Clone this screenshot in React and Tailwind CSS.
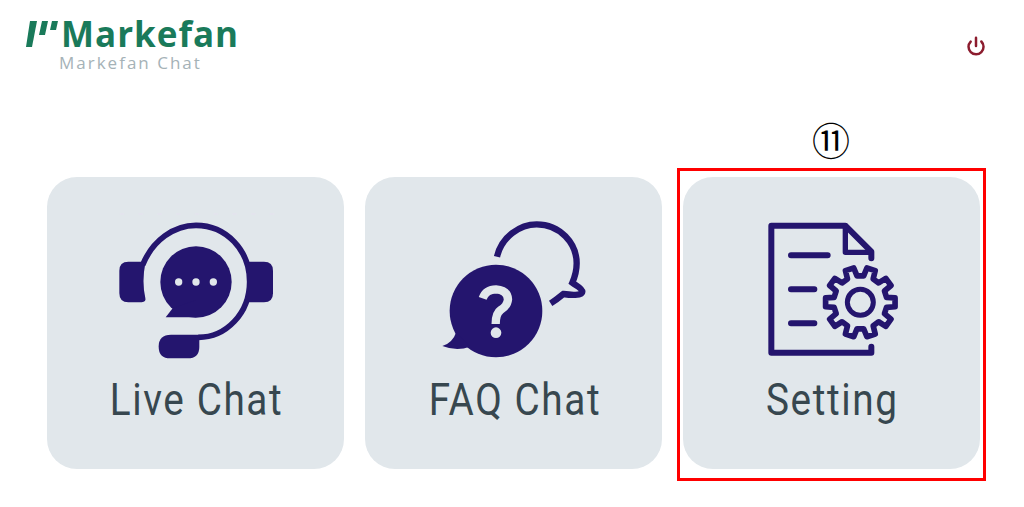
import { Power } from "lucide-react"

const NAVY = "#24156e"
const CARD = "#e1e7eb"

// gear outline, 10 teeth with a notch on top
function gearPath(cx, cy, outer, inner, teeth) {
  const step = (Math.PI * 2) / teeth
  const pts = []
  for (let i = 0; i < teeth; i++) {
    const mid = -Math.PI / 2 + step / 2 + i * step
    const a = step * 0.2
    const b = step * 0.3
    pts.push([mid - b, inner], [mid - a, outer], [mid + a, outer], [mid + b, inner])
  }
  const d = pts.map(([t, r], i) => {
    const x = (cx + Math.cos(t) * r).toFixed(1)
    const y = (cy + Math.sin(t) * r).toFixed(1)
    return `${i === 0 ? "M" : "L"}${x} ${y}`
  })
  return d.join(" ") + " Z"
}

function LiveChatIcon() {
  return (
    <svg width="210" height="170" viewBox="0 0 630 510">
      <g stroke="#e4e4ee" strokeWidth="5" strokeLinecap="round">
        {[0, 1, 2, 3, 4, 5, 6, 7, 8].map((i) => (
          <line key={i} x1={88 + i * 56.3} y1="42" x2={98 + i * 56.3} y2="42" />
        ))}
      </g>
      <path
        d="M155 195 C185 120 250 76 315 76 C405 76 476 150 476 245 C476 340 405 412 322 412"
        fill="none"
        stroke={NAVY}
        strokeWidth="17"
      />
      <path
        d="M152 185 H112 Q85 185 85 212 V280 Q85 307 112 307 H152 Q166 305 163 294 Q152 245 163 190 Z"
        fill={NAVY}
      />
      <path
        d="M472 185 H519 Q546 185 546 212 V280 Q546 307 519 307 H472 Z"
        fill={NAVY}
      />
      <path
        d="M240 404 H325 V440 Q325 475 290 475 H238 Q203 475 203 440 Q203 404 240 404 Z"
        fill={NAVY}
      />
      <circle cx="315" cy="246" r="107" fill={NAVY} />
      <path d="M245 325 L224 352 H315 V300 Z" fill={NAVY} />
      <circle cx="263" cy="246" r="11" fill={CARD} />
      <circle cx="315" cy="246" r="11" fill={CARD} />
      <circle cx="367" cy="246" r="11" fill={CARD} />
    </svg>
  )
}

function FaqIcon() {
  return (
    <svg width="210" height="170" viewBox="0 0 630 510">
      <g transform="translate(33 30)">
        <path
          d="M231 140 C245 80 300 43 350 43 C420 43 470 100 470 160 C470 180 465 200 457 218 C470 228 487 235 487 245 C487 258 450 255 430 252 C418 262 405 272 392 280"
          fill="none"
          stroke={NAVY}
          strokeWidth="19"
        />
        <circle cx="228" cy="303" r="139" fill={NAVY} />
        <path d="M108 368 Q98 398 67 408 Q110 425 150 410 Z" fill={NAVY} />
        <path
          d="M188 265 Q198 238 228 238 Q262 240 264 268 Q262 288 242 300 Q227 310 227 342"
          fill="none"
          stroke={CARD}
          strokeWidth="25"
        />
        <circle cx="228" cy="368" r="16" fill={CARD} />
      </g>
    </svg>
  )
}

function SettingIcon() {
  return (
    <svg width="210" height="170" viewBox="0 0 630 510">
      <g
        transform="translate(70 30)"
        fill="none"
        stroke={NAVY}
        strokeWidth="18"
        strokeLinecap="round"
        strokeLinejoin="round"
      >
        <path d="M363 145 V125 L285 47 H63 V428 H363 V410" />
        <path d="M285 47 V127 H363" strokeWidth="16" />
        <path d="M122 136 H232 M122 238 H192 M122 340 H192" />
        <path d={gearPath(330, 277, 105, 80, 10)} strokeWidth="17" />
        <circle cx="330" cy="277" r="39" strokeWidth="15" />
      </g>
    </svg>
  )
}

const MENU = [
  { label: "Live Chat", icon: LiveChatIcon },
  { label: "FAQ Chat", icon: FaqIcon },
  { label: "Setting", icon: SettingIcon },
]

export default function App() {
  return (
    <div className="relative h-[507px] w-full overflow-hidden bg-white">
      {/* Header */}
      <div className="flex h-[177px] items-start justify-between pl-[26px] pr-[38px] pt-[15px]">
        <div className="flex items-start">
          <svg width="36" height="30" viewBox="0 0 36 30" className="mt-[5px]">
            <path d="M4 1 H11 L6 27 H0 Z" fill="#1a7a5a" />
            <path d="M16 1 H22 L19 15 H13 Z" fill="#1a7a5a" />
            <path d="M26 1 H32 L30 10 H24 Z" fill="#1a7a5a" />
          </svg>
          <div className="-ml-[1px] flex flex-col font-['Open_Sans',sans-serif]">
            <span className="text-[35px] font-bold leading-[38px] tracking-[1px] text-[#1a7a5a]">Markefan</span>
            <span className="-ml-[2px] mt-[1px] text-[17px] leading-[18px] tracking-[2px] text-[#a5b2b7]">
              Markefan Chat
            </span>
          </div>
        </div>
        <Power size={20} strokeWidth={3} className="mt-[21px] text-[#8c1c2e]" />
      </div>

      {/* Cards */}
      <div className="flex gap-[21px] pl-[47px]">
        {MENU.map((item) => {
          const Icon = item.icon
          return (
            <div
              key={item.label}
              className="flex h-[292px] w-[297px] flex-col items-center rounded-[30px] bg-[#e1e7eb] pt-[23px]"
            >
              <Icon />
              <span className="ml-[2px] mt-[2px] scale-x-[0.88] whitespace-nowrap font-['Roboto',sans-serif] text-[44px] leading-[56px] tracking-[1.8px] text-[#37474f]">
                {item.label}
              </span>
            </div>
          )
        })}
      </div>

      {/* Annotation */}
      <div className="absolute left-[677px] top-[168px] h-[313px] w-[309px] border-[3px] border-[#ff0000]" />
      <span className="absolute left-[812px] top-[116px] font-['Noto_Sans_CJK_JP',sans-serif] text-[38px] leading-[46px] text-black">
        ⑪
      </span>
    </div>
  )
}
